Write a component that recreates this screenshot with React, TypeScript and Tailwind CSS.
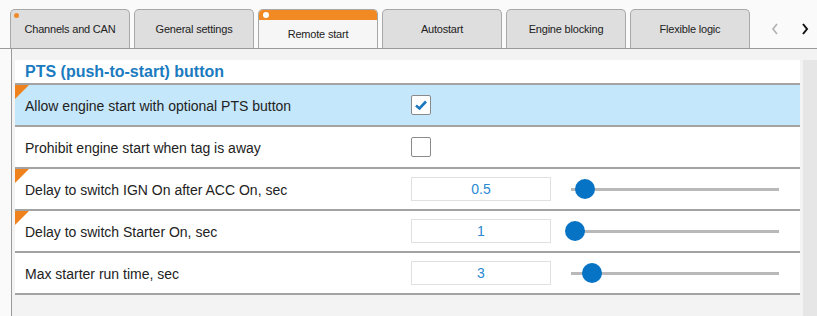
import React from "react";

const tabs = [
  { label: "Channels and CAN", dot: true },
  { label: "General settings" },
  { label: "Remote start", active: true },
  { label: "Autostart" },
  { label: "Engine blocking" },
  { label: "Flexible logic" },
];

function Corner() {
  return (
    <svg className="absolute left-0 top-0" width="14" height="14" viewBox="0 0 14 14">
      <polygon points="0,0 14,0 0,14" fill="#f0821e" />
    </svg>
  );
}

function Slider({ pos }: { pos: number }) {
  return (
    <div className="relative ml-[20px] flex h-[20px] w-[208px] items-center">
      <div className="h-[3px] w-full bg-[#b9b9b9]" />
      <div
        className="absolute top-0 h-[20px] w-[20px] rounded-full bg-[#0673c4]"
        style={{ left: pos - 10 }}
      />
    </div>
  );
}

function Row({
  label,
  corner,
  active,
  children,
}: {
  label: string;
  corner?: boolean;
  active?: boolean;
  children?: React.ReactNode;
}) {
  return (
    <div
      className={`relative flex h-[42px] items-center border-b-2 border-[#a3a3a3] ${
        active ? "bg-[#c5e7fb]" : "bg-white"
      }`}
    >
      {corner && <Corner />}
      <div className="w-[396px] pl-[10px] pt-[3px] text-[14px] text-[#222]">{label}</div>
      <div className="flex items-center">{children}</div>
    </div>
  );
}

function Check({ checked }: { checked?: boolean }) {
  return (
    <div className="flex h-[20px] w-[20px] items-center justify-center rounded-[2px] border border-[#8a8a8a] bg-white">
      {checked && (
        <svg width="14" height="12" viewBox="0 0 14 12">
          <path d="M2 6.5 L5.5 9.5 L12 2.5" fill="none" stroke="#1b78bf" strokeWidth="2.6" />
        </svg>
      )}
    </div>
  );
}

function Input({ value }: { value: string }) {
  return (
    <div className="flex h-[24px] w-[140px] items-center justify-center border border-[#e0e0e0] bg-white pt-[1px] text-[14px] text-[#2a8ad2]">
      {value}
    </div>
  );
}

export default function App() {
  return (
    <div
      className="h-[316px] w-[817px] overflow-hidden bg-[#fafafa]"
      style={{ fontFamily: "'Liberation Sans', Arial, sans-serif" }}
    >
      <div className="flex h-[49px] items-end border-b border-[#9a9a9a] pl-[10px]">
        <div className="flex gap-[4px]">
          {tabs.map((t) =>
            t.active ? (
              <div
                key={t.label}
                className="relative flex h-[39px] w-[120px] flex-col overflow-hidden rounded-t-[5px] border border-b-0 border-[#a8a8a8] bg-[#f6f6f6]"
              >
                <div className="h-[10px] bg-[#f28a24]" />
                <div className="absolute left-[4px] top-[2px] h-[6px] w-[6px] rounded-full bg-white" />
                <div className="flex flex-1 items-center justify-center pt-[1px] text-[11px] tracking-[-0.2px] text-[#222]">
                  {t.label}
                </div>
              </div>
            ) : (
              <div
                key={t.label}
                className="relative flex h-[39px] w-[120px] items-center justify-center rounded-t-[5px] border border-b-0 border-[#a8a8a8] bg-[#dedede] pt-[1px] text-[11px] tracking-[-0.2px] text-[#222]"
              >
                {t.dot && (
                  <div className="absolute left-[3px] top-[3px] h-[5px] w-[5px] rounded-full bg-[#f08a2a]" />
                )}
                {t.label}
              </div>
            )
          )}
        </div>
        <div className="ml-[20px] flex h-[39px] items-center gap-[20px]">
          <svg width="10" height="14" viewBox="0 0 10 14">
            <path d="M7 2 L3 7 L7 12" fill="none" stroke="#b0b0b0" strokeWidth="1.6" />
          </svg>
          <svg width="10" height="14" viewBox="0 0 10 14">
            <path d="M3 2 L7 7 L3 12" fill="none" stroke="#111" strokeWidth="2" />
          </svg>
        </div>
      </div>
      <div className="ml-[11px] flex h-[267px] border-l border-[#9a9a9a] bg-[#f3f3f3]">
        <div className="ml-[3px] mt-[11px] w-[785px]">
          <div className="h-[25px] border-b-2 border-[#a3a3a3] bg-white pl-[10px] text-[16px] font-bold leading-[24px] text-[#1b7bc0]">
            PTS (push-to-start) button
          </div>
          <Row label="Allow engine start with optional PTS button" corner active>
            <Check checked />
          </Row>
          <Row label="Prohibit engine start when tag is away">
            <Check />
          </Row>
          <Row label="Delay to switch IGN On after ACC On, sec" corner>
            <Input value="0.5" />
            <Slider pos={14} />
          </Row>
          <Row label="Delay to switch Starter On, sec" corner>
            <Input value="1" />
            <Slider pos={4} />
          </Row>
          <Row label="Max starter run time, sec">
            <Input value="3" />
            <Slider pos={21} />
          </Row>
        </div>
        <div className="ml-[3px] mt-[11px] w-[14px] bg-[#e6e6e6]" />
      </div>
    </div>
  );
}
